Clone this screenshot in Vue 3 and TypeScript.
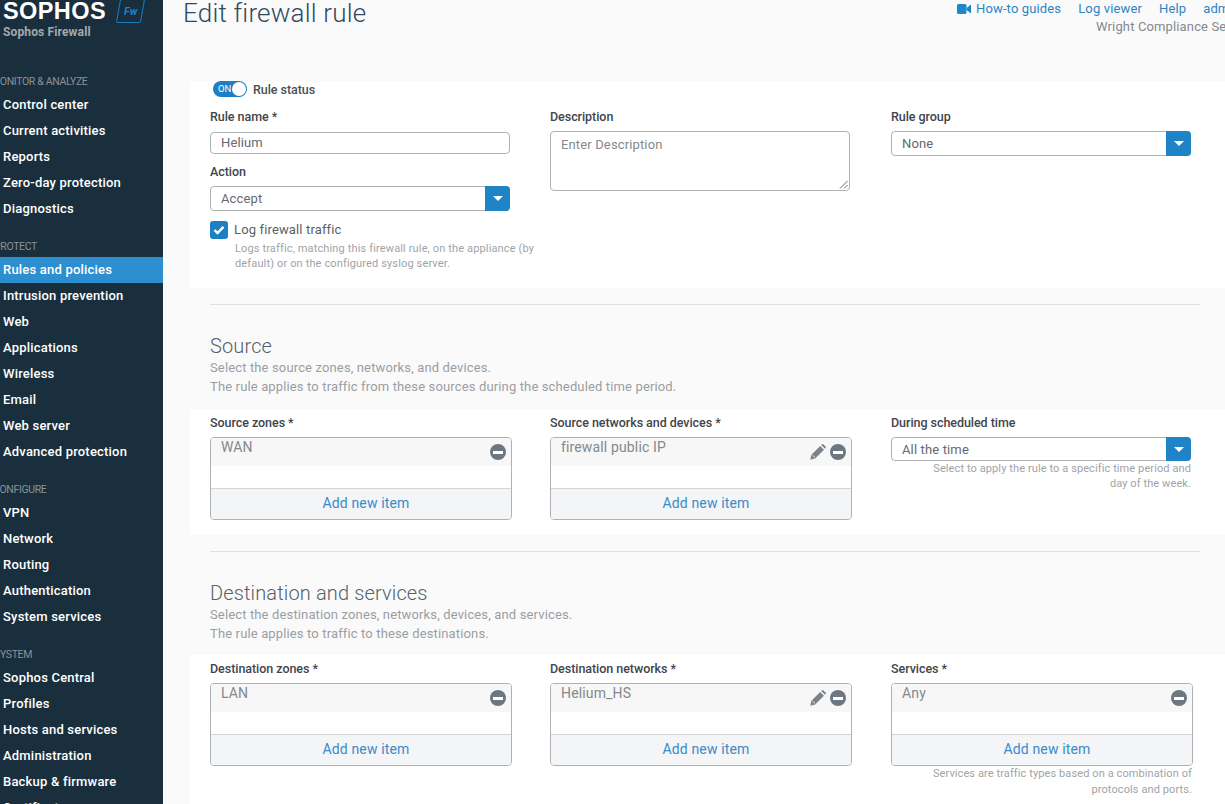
<script setup lang="ts">
interface NavGroup { label: string; indent: number; items: string[] }
const nav: NavGroup[] = [
  { label: 'MONITOR & ANALYZE', indent: -9, items: ['Control center', 'Current activities', 'Reports', 'Zero-day protection', 'Diagnostics'] },
  { label: 'PROTECT', indent: -6, items: ['Rules and policies', 'Intrusion prevention', 'Web', 'Applications', 'Wireless', 'Email', 'Web server', 'Advanced protection'] },
  { label: 'CONFIGURE', indent: -7, items: ['VPN', 'Network', 'Routing', 'Authentication', 'System services'] },
  { label: 'SYSTEM', indent: -6, items: ['Sophos Central', 'Profiles', 'Hosts and services', 'Administration', 'Backup & firmware', 'Certificates'] },
]
</script>

<template>
  <div class="page">
    <aside class="sidebar">
      <div class="logo">
        <div class="logo-top">
          <span class="wordmark">SOPHOS</span>
          <span class="badge"><i>Fw</i></span>
        </div>
        <div class="product">Sophos Firewall</div>
      </div>
      <section v-for="g in nav" :key="g.label" class="nav-group">
        <div class="nav-label" :style="{ marginLeft: g.indent + 'px' }">{{ g.label }}</div>
        <a v-for="i in g.items" :key="i" class="nav-item" :class="{ active: i === 'Rules and policies' }">{{ i }}</a>
      </section>
    </aside>

    <main class="main">
      <header class="top">
        <h1>Edit firewall rule</h1>
        <div class="top-right">
          <div class="links">
            <a class="howto">
              <svg width="14" height="10" viewBox="0 0 14 10"><rect x="0" y="0" width="9.5" height="10" rx="1.5" fill="#1e87c9"/><path d="M9.5 4 L14 0.5 V9.5 L9.5 6 Z" fill="#1e87c9"/></svg>
              How-to guides
            </a>
            <a>Log viewer</a>
            <a>Help</a>
            <a>admin</a>
          </div>
          <div class="company">Wright Compliance Services</div>
        </div>
      </header>

      <section class="panel first">
        <div class="status">
          <span class="toggle"><span class="on">ON</span><span class="knob"></span></span>
          <span class="status-text">Rule status</span>
        </div>
        <div class="cols">
          <div class="col">
            <label class="lbl name">Rule name *</label>
            <div class="input">Helium</div>
            <label class="lbl action">Action</label>
            <div class="select"><span>Accept</span><b><i class="caret"></i></b></div>
            <div class="check">
              <span class="box">
                <svg width="12" height="10" viewBox="0 0 12 10"><path d="M1.5 5 L4.5 8 L10.5 1.8" fill="none" stroke="#fff" stroke-width="2.4"/></svg>
              </span>
              <div>
                <div class="check-text">Log firewall traffic</div>
                <div class="help">Logs traffic, matching this firewall rule, on the appliance (by default) or on the configured syslog server.</div>
              </div>
            </div>
          </div>
          <div class="col">
            <label class="lbl">Description</label>
            <div class="textarea">Enter Description
              <svg class="grip" width="9" height="9" viewBox="0 0 9 9"><path d="M8.5 1 L1 8.5 M8.5 5 L5 8.5" stroke="#666" stroke-width="1"/></svg>
            </div>
          </div>
          <div class="col">
            <label class="lbl">Rule group</label>
            <div class="select"><span>None</span><b><i class="caret"></i></b></div>
          </div>
        </div>
      </section>

      <hr class="rule" />

      <div class="intro">
        <h2>Source</h2>
        <p>Select the source zones, networks, and devices.</p>
        <p>The rule applies to traffic from these sources during the scheduled time period.</p>
      </div>

      <section class="panel pick">
        <div class="cols">
          <div class="col">
            <label class="lbl">Source zones *</label>
            <div class="list">
              <div class="row"><span>WAN</span><span class="minus"></span></div>
              <div class="add">Add new item</div>
            </div>
          </div>
          <div class="col">
            <label class="lbl">Source networks and devices *</label>
            <div class="list">
              <div class="row"><span>firewall public IP</span>
                <svg class="pencil" width="16" height="16" viewBox="0 0 16 16"><path d="M0.3 15.7 L1.4 10.8 L10.2 2 L14 5.8 L5.2 14.6 Z M11.2 1 L12.2 0.2 Q12.7 0 13.2 0.2 L15.8 2.8 Q16 3.3 15.8 3.8 L15 4.8 Z" fill="#7c8287"/><path d="M2.4 11 L5 13.6" stroke="#f7f7f7" stroke-width="0.9"/></svg>
                <span class="minus"></span></div>
              <div class="add">Add new item</div>
            </div>
          </div>
          <div class="col">
            <label class="lbl">During scheduled time</label>
            <div class="select sched"><span>All the time</span><b><i class="caret"></i></b></div>
            <div class="note">Select to apply the rule to a specific time period and day of the week.</div>
          </div>
        </div>
      </section>

      <hr class="rule" />

      <div class="intro second">
        <h2>Destination and services</h2>
        <p>Select the destination zones, networks, devices, and services.</p>
        <p>The rule applies to traffic to these destinations.</p>
      </div>

      <section class="panel pick last">
        <div class="cols">
          <div class="col">
            <label class="lbl">Destination zones *</label>
            <div class="list">
              <div class="row"><span>LAN</span><span class="minus"></span></div>
              <div class="add">Add new item</div>
            </div>
          </div>
          <div class="col">
            <label class="lbl">Destination networks *</label>
            <div class="list">
              <div class="row"><span>Helium_HS</span>
                <svg class="pencil" width="16" height="16" viewBox="0 0 16 16"><path d="M0.3 15.7 L1.4 10.8 L10.2 2 L14 5.8 L5.2 14.6 Z M11.2 1 L12.2 0.2 Q12.7 0 13.2 0.2 L15.8 2.8 Q16 3.3 15.8 3.8 L15 4.8 Z" fill="#7c8287"/><path d="M2.4 11 L5 13.6" stroke="#f7f7f7" stroke-width="0.9"/></svg>
                <span class="minus"></span></div>
              <div class="add">Add new item</div>
            </div>
          </div>
          <div class="col">
            <label class="lbl">Services *</label>
            <div class="list">
              <div class="row"><span>Any</span><span class="minus"></span></div>
              <div class="add">Add new item</div>
            </div>
            <div class="note svc">Services are traffic types based on a combination of protocols and ports.</div>
          </div>
        </div>
      </section>
    </main>
  </div>
</template>

<style>
html, body { margin: 0; overflow: hidden; }
</style>

<style scoped>
.page {
  display: flex;
  width: 1225px;
  height: 804px;
  overflow: hidden;
  background: #fafafa;
  font-family: Roboto, "Noto Sans", sans-serif;
  font-size: 13px;
  letter-spacing: 0.14px;
  color: #4a4f55;
}
.sidebar {
  flex: 0 0 163px;
  width: 163px;
  height: 804px;
  overflow: hidden;
  background: #1a2f3d;
  color: #fff;
}
.logo { height: 57px; padding-left: 3px; }
.logo-top { display: flex; align-items: flex-start; height: 24px; }
.wordmark {
  font-family: "Liberation Sans", sans-serif;
  font-weight: 700;
  font-size: 23.5px;
  line-height: 23px;
  letter-spacing: 0.4px;
  color: #fff;
  white-space: nowrap;
}
.badge {
  display: flex;
  align-items: center;
  justify-content: center;
  width: 25px;
  height: 24px;
  margin: -1px 0 0 12px;
  border: 1.5px solid #1a7cc0;
  border-radius: 2px;
  transform: skewX(-10deg);
  color: #1a84c9;
  font-size: 10.5px;
  font-weight: 700;
  box-sizing: border-box;
}
.badge i { transform: skewX(10deg); font-style: italic; }
.product {
  margin-top: 1px;
  font-size: 12px;
  line-height: 14px;
  font-weight: 700;
  color: #a3a9ae;
}
.nav-group { margin-top: 14px; }
.nav-label {
  height: 21px;
  line-height: 21px;
  font-size: 10.5px;
  letter-spacing: -0.35px;
  color: #8b9298;
  white-space: nowrap;
}
.nav-item {
  display: block;
  height: 26px;
  line-height: 26px;
  padding-left: 3px;
  font-size: 13px;
  font-weight: 500;
  letter-spacing: 0.2px;
  color: #fff;
  white-space: nowrap;
}
.nav-item.active { background: #2d8fd0; }

.main { flex: 1; min-width: 0; overflow: hidden; }
.top { display: flex; height: 81px; padding-left: 20px; }
.top h1 {
  flex: 1;
  margin: -1px 0 0;
  font-size: 26px;
  line-height: 28px;
  font-weight: 300;
  letter-spacing: 0.2px;
  color: #2f4a60;
  white-space: nowrap;
}
.top-right { width: 268px; overflow: hidden; white-space: nowrap; font-size: 13px; }
.links { display: flex; gap: 17px; height: 17px; line-height: 17px; color: #2d84c4; }
.links a { display: block; }
.howto { display: flex !important; align-items: center; gap: 5px; }
.company { padding-left: 139px; line-height: 20px; color: #85898d; margin-top: 0; }

.panel { margin-left: 27px; background: #fff; }
.panel.first { height: 207px; padding-left: 20px; box-sizing: border-box; }
.panel.pick { height: 126px; padding-left: 20px; box-sizing: border-box; padding-top: 6px; }
.panel.pick.last { height: 149px; }
.status { display: flex; align-items: center; gap: 6px; height: 16px; margin: 0 0 12px 3px; }
.toggle {
  position: relative;
  display: block;
  width: 34px;
  height: 16px;
  border-radius: 8px;
  background: #1e7fc2;
}
.on { position: absolute; left: 5px; top: 0; line-height: 16px; font-size: 9.5px; letter-spacing: 0; color: #fff; }
.knob {
  position: absolute;
  right: 1px;
  top: 1px;
  width: 14px;
  height: 14px;
  border-radius: 50%;
  background: #fff;
}
.status-text { font-size: 12.5px; font-weight: 500; letter-spacing: -0.05px; color: #4a4f55; }
.cols { display: grid; grid-template-columns: 340px 341px 300px; }
.col { width: 300px; }
.lbl { display: block; height: 16px; line-height: 16px; font-size: 12.5px; font-weight: 500; letter-spacing: -0.05px; color: #3f454b; margin-bottom: 6px; }
.lbl.name { margin-bottom: 7px; }
.lbl.action { margin: 10px 0 6px; }
.input {
  height: 22px;
  line-height: 20px;
  box-sizing: border-box;
  border: 1px solid #aeb2b6;
  border-radius: 4px;
  padding-left: 10px;
  background: #fff;
  color: #66696d;
}
.select {
  display: flex;
  justify-content: space-between;
  height: 25px;
  line-height: 23px;
  box-sizing: border-box;
  border: 1px solid #aeb2b6;
  border-radius: 4px;
  padding-left: 10px;
  background: #fff;
  color: #66696d;
}
.select.sched { height: 24px; line-height: 23px; }
.select b {
  display: flex;
  align-items: center;
  justify-content: center;
  width: 25px;
  margin: -1px -1px -1px 0;
  border-radius: 0 4px 4px 0;
  background: #1e84c7;
}
.caret {
  display: block;
  width: 0;
  height: 0;
  border-left: 5px solid transparent;
  border-right: 5px solid transparent;
  border-top: 5px solid #fff;
}
.check { display: flex; gap: 6px; margin-top: 10px; }
.box {
  display: flex;
  align-items: center;
  justify-content: center;
  flex: 0 0 18px;
  width: 18px;
  height: 18px;
  border-radius: 3px;
  background: #1e7fc2;
}
.check-text { line-height: 18px; color: #5a5f64; }
.help { margin: 2px 0 0 1px; width: 306px; font-size: 11px; line-height: 15px; color: #a0a4a8; }
.textarea {
  position: relative;
  height: 60px;
  box-sizing: border-box;
  border: 1px solid #aeb2b6;
  border-radius: 4px;
  padding: 5px 10px;
  line-height: 16px;
  background: #fff;
  color: #85898d;
}
.grip { position: absolute; right: 1px; bottom: 1px; }

.rule { height: 1px; margin: 16px 25px 0 47px; border: 0; background: #dedede; }
.intro { padding-left: 47px; height: 104px; box-sizing: border-box; padding-top: 30px; }
.intro.second { height: 103px; }
.intro h2 { margin: 0 0 1px; font-size: 20px; line-height: 22px; font-weight: 300; color: #55616b; }
.intro p { margin: 0; line-height: 19px; color: #9a9ea2; }

.list {
  height: 83px;
  box-sizing: border-box;
  border: 1px solid #aeb2b6;
  border-radius: 4px;
  display: flex;
  flex-direction: column;
  width: 302px;
  background: #fff;
  overflow: hidden;
}
.row {
  display: flex;
  align-items: center;
  height: 28px;
  padding: 0 5px 0 10px;
  background: #f7f7f7;
  font-size: 14px;
  color: #85898d;
}
.row > span:first-child { flex: 1; margin-top: -11px; }
.pencil { margin: 0 4px 0 0; }
.minus {
  position: relative;
  display: block;
  width: 16px;
  height: 16px;
  border-radius: 50%;
  background: #6c7782;
}
.minus::after {
  content: "";
  position: absolute;
  left: 3px;
  right: 3px;
  top: 6.5px;
  height: 3px;
  background: #fff;
}
.add {
  margin-top: auto;
  height: 31px;
  line-height: 29px;
  padding-left: 10px;
  border-top: 1px solid #d2d4d6;
  box-sizing: border-box;
  text-align: center;
  background: #f4f5f6;
  color: #3a8bcb;
  font-size: 14px;
}
.note {
  margin: 0;
  text-align: right;
  font-size: 11px;
  line-height: 15px;
  letter-spacing: 0.1px;
  color: #a0a4a8;
  padding-left: 30px;
}
.note.svc { line-height: 16px; width: 301px; box-sizing: border-box; }
</style>
